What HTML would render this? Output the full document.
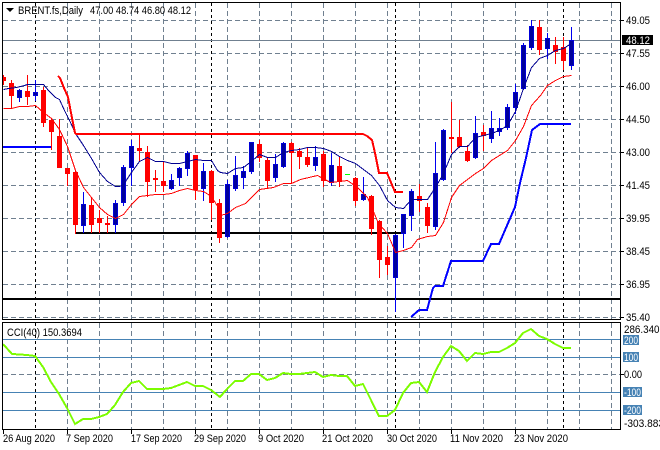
<!DOCTYPE html>
<html><head><meta charset="utf-8"><style>
html,body{margin:0;padding:0;background:#fff}
svg{display:block}
text{font-family:"Liberation Sans",sans-serif;font-size:11px;fill:#000}
</style></head><body>
<svg width="660" height="450" viewBox="0 0 660 450" xmlns="http://www.w3.org/2000/svg">
<rect width="660" height="450" fill="#fff"/>
<g shape-rendering="crispEdges" fill="none">
<path stroke="#708090" stroke-dasharray="5 3" d="M3 20.5H620M3 53.5H620M3 86.5H620M3 119.5H620M3 152.5H620M3 185.5H620M3 218.5H620M3 251.5H620M3 284.5H620M3 317.5H620M3 374.5H620"/>
<path stroke="#708090" stroke-dasharray="5 3" d="M67.5 3V319M99.5 3V319M131.5 3V319M163.5 3V319M195.5 3V319M227.5 3V319M259.5 3V319M291.5 3V319M323.5 3V319M355.5 3V319M387.5 3V319M419.5 3V319M451.5 3V319M483.5 3V319M515.5 3V319M547.5 3V319M579.5 3V319M611.5 3V319M67.5 323V429M99.5 323V429M131.5 323V429M163.5 323V429M195.5 323V429M227.5 323V429M259.5 323V429M291.5 323V429M323.5 323V429M355.5 323V429M387.5 323V429M419.5 323V429M451.5 323V429M483.5 323V429M515.5 323V429M547.5 323V429M579.5 323V429M611.5 323V429"/>
<path stroke="#000" stroke-dasharray="3 3" d="M35.5 3V319M211.5 3V319M395.5 3V319M563.5 3V319M35.5 323V429M211.5 323V429M395.5 323V429M563.5 323V429"/>
<path stroke="#708090" d="M3 40.5H620"/>
<path stroke="#4682b4" d="M3 339.5H620M3 357.5H620M3 392.5H620M3 410.5H620"/>
<path stroke="#000" stroke-width="2" d="M75 233H403M3 299H620"/>
<path stroke="#f00" d="M3.5 75V85M11.5 80V108M27.5 75V105M43.5 87V127M51.5 119V150M59.5 119V168M67.5 168V186M75.5 170V234M91.5 197V233M99.5 210V233M107.5 216V233M139.5 134V162M147.5 146V197M155.5 170V192M163.5 161V192M195.5 155V200M211.5 170V220M219.5 199V243M259.5 140V162M267.5 158V189M291.5 142V183M299.5 148V169M307.5 147V167M323.5 151V187M339.5 157V187M355.5 177V206M371.5 195V235M379.5 220V278M387.5 246V275M419.5 184V212M427.5 203V233M451.5 102V153M459.5 120V148M467.5 145V162M483.5 125V151M539.5 20V55M555.5 37V64M563.5 37V70"/>
<path fill="#f00" d="M3 77h3v4h-3zM9 83h5v13h-5zM25 91h5v6h-5zM41 90h5v33h-5zM49 120h5v12h-5zM57 136h5v32h-5zM65 168h5v6h-5zM73 172h5v53h-5zM89 205h5v20h-5zM97 218h5v5h-5zM105 223h5v2h-5zM137 148h5v3h-5zM145 152h5v30h-5zM153 178h5v2h-5zM161 181h5v5h-5zM193 155h5v35h-5zM209 171h5v32h-5zM217 203h5v35h-5zM257 144h5v14h-5zM265 160h5v21h-5zM289 143h5v10h-5zM297 151h5v6h-5zM305 157h5v8h-5zM321 154h5v27h-5zM337 166h5v16h-5zM353 178h5v23h-5zM369 196h5v33h-5zM377 221h5v39h-5zM385 257h5v8h-5zM417 196h5v5h-5zM425 207h5v19h-5zM449 137h5v2h-5zM457 137h5v10h-5zM465 151h5v10h-5zM481 132h5v4h-5zM537 27h5v23h-5zM553 45h5v7h-5zM561 47h5v14h-5z"/>
<path stroke="#0000f0" d="M19.5 89V102M35.5 80V101M83.5 192V233M115.5 200V233M123.5 165V206M131.5 140V186M171.5 174V190M179.5 167V186M187.5 151V176M203.5 163V201M227.5 180V238M235.5 156V191M243.5 166V189M251.5 142V174M275.5 154V182M283.5 142V168M315.5 146V171M331.5 153V186M363.5 177V201M395.5 234V312M403.5 214V248M411.5 189V231M435.5 142V230M443.5 129V181M475.5 116V159M491.5 111V143M499.5 118V136M507.5 104V130M515.5 84V114M523.5 43V90M531.5 20V50M547.5 33V59M571.5 27V70"/>
<path fill="#00009c" stroke="#0000d8" d="M17.5 90.5h4v7h-4zM33.5 92.5h4v3h-4zM81.5 204.5h4v21h-4zM113.5 203.5h4v21h-4zM121.5 167.5h4v35h-4zM129.5 146.5h4v21h-4zM169.5 180.5h4v8h-4zM177.5 168.5h4v9h-4zM185.5 153.5h4v15h-4zM201.5 171.5h4v17h-4zM225.5 184.5h4v52h-4zM233.5 175.5h4v13h-4zM241.5 171.5h4v6h-4zM249.5 142.5h4v29h-4zM273.5 164.5h4v13h-4zM281.5 143.5h4v23h-4zM313.5 157.5h4v8h-4zM329.5 165.5h4v17h-4zM361.5 194.5h4v5h-4zM393.5 235.5h4v42h-4zM401.5 214.5h4v19h-4zM409.5 191.5h4v24h-4zM433.5 173.5h4v53h-4zM441.5 130.5h4v49h-4zM473.5 133.5h4v24h-4zM489.5 128.5h4v10h-4zM497.5 128.5h4v3h-4zM505.5 107.5h4v20h-4zM513.5 92.5h4v15h-4zM521.5 45.5h4v43h-4zM529.5 26.5h4v21h-4zM545.5 38.5h4v10h-4zM569.5 40.5h4v25h-4z"/>
<path stroke="#00ff00" d="M345 174.5h5"/>
</g>
<g fill="none" shape-rendering="crispEdges">
<g transform="translate(.5 .5)">
<polyline stroke="#000090" stroke-width="1" points="3,89 8,88 16,87 24,85 27,84 35,84 43,84 48,90 55,97 59,99 64,110 70,122 75,133 83,145 91,158 99,172 107,181 115,186 119,186 123,184 131,172 139,161 147,157 155,161 163,161 171,163 179,163 187,161 195,159 203,160 211,160 217,170 220,172 227,173 235,168 243,167 252,160 259,154 267,157 275,157 283,152 291,150 299,149 307,147 315,147 323,148 331,151 339,156 347,160 355,163 363,169 371,175 379,185 387,200 395,207 403,208 411,199 419,199 427,199 435,187 443,173 451,154 459,146 467,146 475,137 483,135 491,133 499,130 507,125 515,111 523,88 531,67 539,58 547,55 555,50 563,48 571,43"/>
<polyline stroke="#f00" stroke-width="1" points="3,108 11,108 19,106 27,106 35,105 43,112 51,118 59,129 67,146 75,170 83,187 91,197 99,207 107,214 115,218 123,214 131,204 139,196 147,195 155,194 163,194 171,193 179,190 187,188 195,190 203,191 211,196 219,209 220,215 227,213 235,207 245,203 253,195 259,189 273,187 283,183 291,183 300,179 317,175 330,182 347,180 357,187 367,197 378,223 387,233 393,247 395,252 403,250 411,247 417,239 427,236 435,235 443,222 451,197 459,185 467,179 475,173 483,168 491,160 499,155 507,150 515,140 523,126 531,105 540,95 547,85 555,80 563,76 571,75"/>
</g>
<polyline stroke="#f00" stroke-width="2" points="58,76 60,78 64,88 68,97 72,118 75,133 76,134 363,134 367,136 372,140 375,153 379,173 387,173 395,192 403,192"/>
<path stroke="#0000ff" stroke-width="2" d="M3 147H51"/>
<polyline stroke="#0000ff" stroke-width="2" points="411,317 419,310 427,310 433,288 435,286 443,286 451,261 483,261 491,244 499,244 515,207 520,183 526,158 532,130 540,124 571,124"/>
<polyline stroke="#7cfc00" stroke-width="2" points="3,344 12,354 27,355 35,356 43,367 51,382 59,394 67,408 75,424 83,419 91,419 99,417 107,414 115,405 123,392 131,383 139,381 147,389 163,389 171,388 179,385 187,382 195,386 203,386 211,390 220,397 227,389 235,381 243,381 251,374 259,374 267,380 275,378 283,373 291,374 299,374 307,373 315,372 323,377 331,375 339,376 347,376 355,386 363,384 371,400 379,416 387,416 395,410 403,393 411,383 419,382 427,392 435,372 443,357 451,346 459,351 467,361 475,353 483,354 491,352 499,352 507,348 515,343 523,333 531,329 539,336 547,339 555,344 563,348 571,348"/>
</g>
<g shape-rendering="crispEdges" fill="none" stroke="#000">
<path d="M2.5 2.5H620.5V319.5H2.5ZM2.5 322.5H620.5V429.5H2.5Z"/>
<path d="M621 20.5h3M621 53.5h3M621 86.5h3M621 119.5h3M621 152.5h3M621 185.5h3M621 218.5h3M621 251.5h3M621 284.5h3M621 317.5h3M621 374.5h3M3.5 430v4M67.5 430v4M131.5 430v4M195.5 430v4M259.5 430v4M323.5 430v4M387.5 430v4M451.5 430v4M515.5 430v4"/>
</g>
<path fill="#000" d="M6 8h8l-4 4z"/>
<text x="18" y="14" textLength="65" lengthAdjust="spacingAndGlyphs">BRENT.fs,Daily</text>
<text x="90" y="14" textLength="101" lengthAdjust="spacingAndGlyphs">47.00 48.74 46.80 48.12</text>
<text x="7" y="336" textLength="75" lengthAdjust="spacingAndGlyphs">CCI(40) 150.3694</text>
<text x="626" y="24" textLength="24" lengthAdjust="spacingAndGlyphs">49.05</text>
<text x="626" y="57" textLength="24" lengthAdjust="spacingAndGlyphs">47.55</text>
<text x="626" y="90" textLength="24" lengthAdjust="spacingAndGlyphs">46.00</text>
<text x="626" y="123" textLength="24" lengthAdjust="spacingAndGlyphs">44.50</text>
<text x="626" y="156" textLength="24" lengthAdjust="spacingAndGlyphs">43.00</text>
<text x="626" y="189" textLength="24" lengthAdjust="spacingAndGlyphs">41.45</text>
<text x="626" y="222" textLength="24" lengthAdjust="spacingAndGlyphs">39.95</text>
<text x="626" y="255" textLength="24" lengthAdjust="spacingAndGlyphs">38.45</text>
<text x="626" y="288" textLength="24" lengthAdjust="spacingAndGlyphs">36.95</text>
<text x="626" y="321" textLength="24" lengthAdjust="spacingAndGlyphs">35.40</text>
<rect x="622" y="35" width="31" height="10" fill="#000" shape-rendering="crispEdges"/>
<text x="626" y="44" textLength="24" lengthAdjust="spacingAndGlyphs" style="fill:#fff">48.12</text>
<g shape-rendering="crispEdges" fill="#4682b4">
<rect x="623" y="335" width="16" height="10"/>
<rect x="623" y="352" width="16" height="10"/>
<rect x="623" y="387" width="19" height="10"/>
<rect x="623" y="405" width="19" height="10"/>
</g>
<text x="624" y="333" textLength="41" lengthAdjust="spacingAndGlyphs">286.3406</text>
<text x="624" y="344" textLength="14" lengthAdjust="spacingAndGlyphs" style="fill:#fff">200</text>
<text x="624" y="361" textLength="14" lengthAdjust="spacingAndGlyphs" style="fill:#fff">100</text>
<text x="624" y="378" textLength="18" lengthAdjust="spacingAndGlyphs">0.00</text>
<text x="624" y="396" textLength="17" lengthAdjust="spacingAndGlyphs" style="fill:#fff">-100</text>
<text x="624" y="414" textLength="17" lengthAdjust="spacingAndGlyphs" style="fill:#fff">-200</text>
<text x="624" y="427" textLength="40" lengthAdjust="spacingAndGlyphs">-303.883</text>
<text x="3" y="442" textLength="52" lengthAdjust="spacingAndGlyphs">26 Aug 2020</text>
<text x="66" y="442" textLength="47" lengthAdjust="spacingAndGlyphs">7 Sep 2020</text>
<text x="131" y="442" textLength="51" lengthAdjust="spacingAndGlyphs">17 Sep 2020</text>
<text x="194" y="442" textLength="52" lengthAdjust="spacingAndGlyphs">29 Sep 2020</text>
<text x="258" y="442" textLength="46" lengthAdjust="spacingAndGlyphs">9 Oct 2020</text>
<text x="322" y="442" textLength="51" lengthAdjust="spacingAndGlyphs">21 Oct 2020</text>
<text x="387" y="442" textLength="50" lengthAdjust="spacingAndGlyphs">30 Oct 2020</text>
<text x="450" y="442" textLength="53" lengthAdjust="spacingAndGlyphs">11 Nov 2020</text>
<text x="514" y="442" textLength="54" lengthAdjust="spacingAndGlyphs">23 Nov 2020</text>
</svg>
</body></html>
